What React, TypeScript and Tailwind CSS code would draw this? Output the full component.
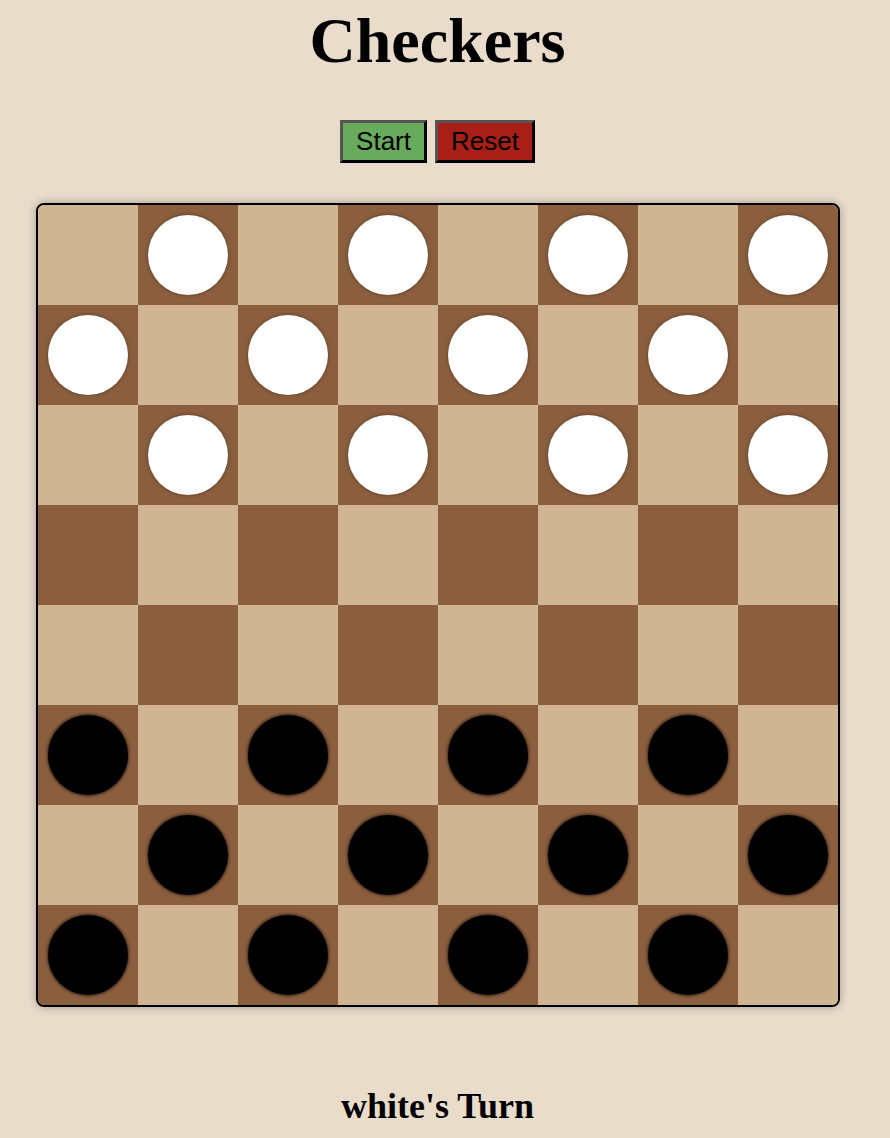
import React from 'react';

type Piece = 'white' | 'black' | null;

// Starting layout: white on rows 0-2, black on rows 5-7, dark squares only
const initialBoard = (): Piece[][] =>
  Array.from({ length: 8 }, (_, r) =>
    Array.from({ length: 8 }, (_, c) => {
      if ((r + c) % 2 === 0) return null;
      if (r < 3) return 'white';
      if (r > 4) return 'black';
      return null;
    })
  );

const Square = ({ dark, piece }: { dark: boolean; piece: Piece }) => (
  <div
    className={`w-[100px] h-[100px] flex items-center justify-center ${
      dark ? 'bg-[#8b5e3e]' : 'bg-[#cfb592]'
    }`}
  >
    {piece && (
      <div
        className={`w-[80px] h-[80px] rounded-full ${
          piece === 'white'
            ? 'bg-white shadow-[0_0_3px_1px_rgba(80,60,40,0.55)]'
            : 'bg-black shadow-[0_0_3px_1px_rgba(0,0,0,0.6)]'
        }`}
      />
    )}
  </div>
);

const App = () => {
  const board = initialBoard();
  const turn = 'white';

  return (
    <div className="min-h-[1138px] pr-[15px] bg-[#e9dccb] flex flex-col items-center font-['Liberation_Serif',serif] text-black">
      <h1 className="mt-[5px] text-[64px] font-bold leading-[71px]">Checkers</h1>

      <div className="mt-[44px] flex gap-[8px] font-['Liberation_Sans',Arial,sans-serif]">
        <button className="h-[43px] px-[13px] text-[26px] leading-[29px] bg-[#68ab5c] border-[3px] border-t-[#555] border-l-[#555] border-b-black border-r-black">
          Start
        </button>
        <button className="h-[43px] px-[13px] text-[26px] leading-[29px] bg-[#a81f17] border-[3px] border-t-[#555] border-l-[#555] border-b-black border-r-black">
          Reset
        </button>
      </div>

      <div className="mt-[40px] border-2 border-black rounded-[8px] overflow-hidden shadow-[0_0_10px_rgba(0,0,0,0.3)]">
        <div className="grid grid-cols-8">
          {board.map((row, r) =>
            row.map((piece, c) => (
              <Square key={`${r}-${c}`} dark={(r + c) % 2 === 1} piece={piece} />
            ))
          )}
        </div>
      </div>

      <h2 className="mt-[79px] text-[36px] font-bold leading-[40px]">{turn}'s Turn</h2>
    </div>
  );
};

export default App;
